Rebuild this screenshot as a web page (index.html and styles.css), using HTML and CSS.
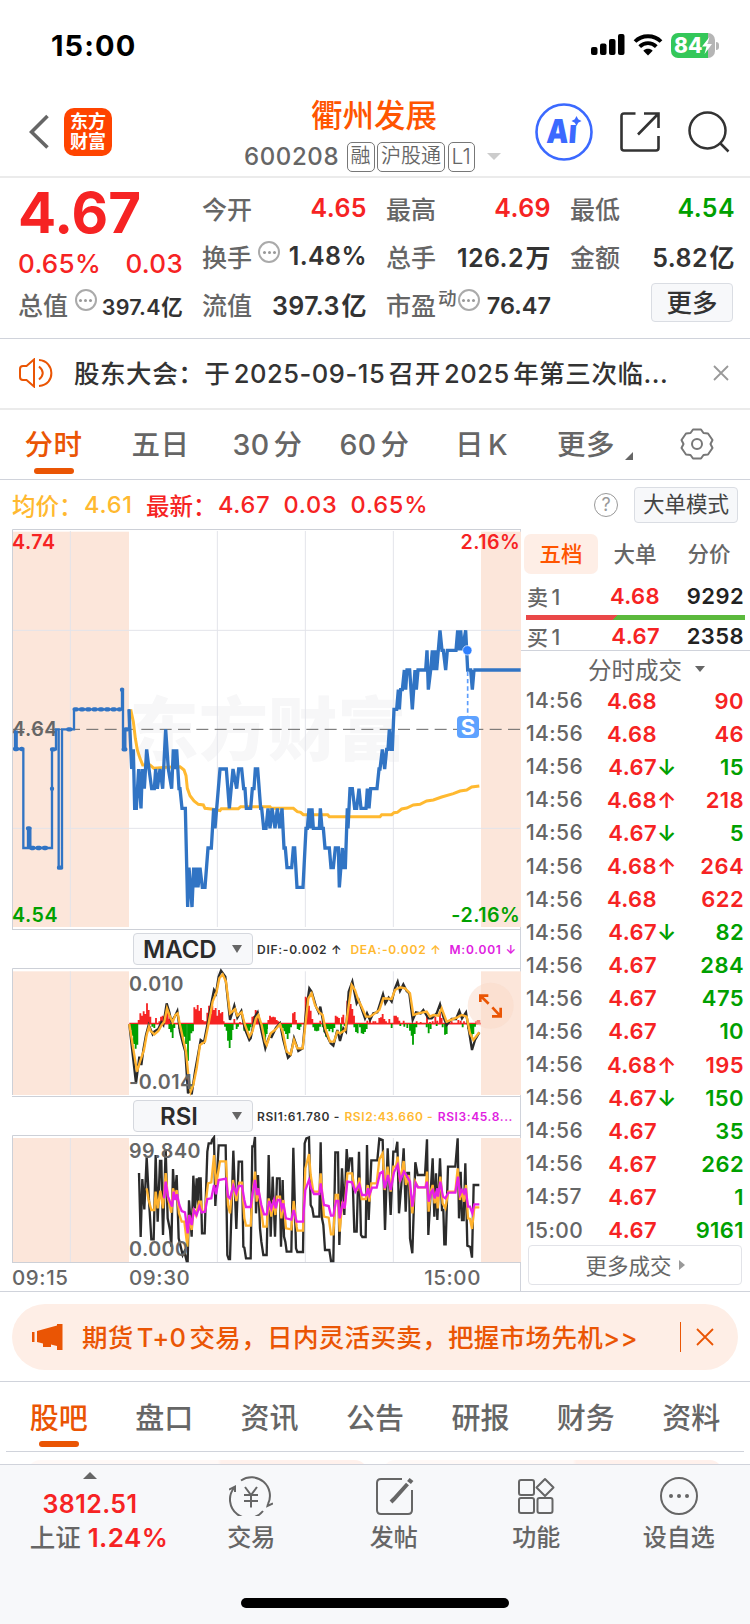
FILE: index.html
```
<!DOCTYPE html>
<html lang="zh-CN">
<head>
    <meta charset="UTF-8">
    <meta name="viewport" content="width=device-width, initial-scale=1.0">
    <title>衢州发展 600208</title>
    <link rel="stylesheet" href="styles.css">
</head>
<body>
    <!-- 状态栏 -->
    <div class="status-bar">
        <span class="clock">15:00</span>
        <div class="status-icons">
            <svg width="34" height="22" viewBox="0 0 34 22">
                <rect x="0" y="13" width="6.500" height="8" rx="2"/>
                <rect x="9" y="9.500" width="6.500" height="11.500" rx="2"/>
                <rect x="18" y="5" width="6.500" height="16" rx="2"/>
                <rect x="27" y="0" width="6.500" height="21" rx="2"/>
            </svg>
            <svg width="30" height="22" viewBox="0 0 30 22">
                <g fill="none" stroke="#000" stroke-width="3.800">
                    <path d="M2 7.500 C9 0.500 21 0.500 28 7.500"/>
                    <path d="M6.700 12.700 C11.500 8 18.500 8 23.300 12.700"/>
                </g>
                <path d="M10.300 16.700 C13 14.200 17 14.200 19.700 16.700 L15 21.500Z"/>
            </svg>
            <div class="battery">
                <span>84</span>
                <svg width="10" height="17" viewBox="0 0 10 17"><path d="M7.500 0 L0 9.500 H4.500 L2.500 17 L10 7 H5.500Z" fill="#fff"/></svg>
            </div>
        </div>
    </div>

    <!-- 标题栏 -->
    <header class="header">
        <div class="header-left">
            <svg width="20" height="36" viewBox="0 0 20 36"><path d="M18.500 2 L2.500 18 L18.500 33.500" fill="none" stroke="#666" stroke-width="3.600"/></svg>
            <div class="logo">东方<br>财富</div>
        </div>
        <div class="header-title">
            <h1>衢州发展</h1>
            <div class="code-line">
                <span class="code">600208</span>
                <span class="tag">融</span>
                <span class="tag">沪股通</span>
                <span class="tag tag-latin">L1</span>
                <i class="arrow-down"></i>
            </div>
        </div>
        <div class="header-right">
            <svg width="58" height="58" viewBox="0 0 58 58">
                <circle cx="29" cy="29" r="27.500" fill="#fff" stroke="#3b69ff" stroke-width="2.600"/>
                <text transform="translate(11 40) skewX(-4) scale(0.84 1)" class="ai-text">Aı</text>
                <path d="M41.500 13 L43.200 16.300 L46.500 18 L43.200 19.700 L41.500 23 L39.800 19.700 L36.500 18 L39.800 16.300Z" fill="#3b69ff"/>
            </svg>
            <svg width="40" height="40" viewBox="0 0 40 40" fill="none" stroke="#333" stroke-width="2.600">
                <path d="M15.500 1.500 H4 Q1.500 1.500 1.500 4 V36 Q1.500 38.500 4 38.500 H36 Q38.500 38.500 38.500 36 V24"/>
                <path d="M24 1.500 H38.500 V16 M38 2 L18 22.500"/>
            </svg>
            <svg width="42" height="42" viewBox="0 0 42 42" fill="none" stroke="#333" stroke-width="2.500">
                <circle cx="19.500" cy="19.500" r="18"/>
                <path d="M32 32 L40.500 40.500"/>
            </svg>
        </div>
    </header>

    <!-- 行情 -->
    <section class="quote">
        <div class="quote-col quote-price">
            <div class="price">4.67</div>
            <div class="change"><span>0.65%</span><span>0.03</span></div>
            <div class="cell cell-small"><label>总值</label><i class="dots"></i><b>397.4 亿</b></div>
        </div>
        <div class="quote-col">
            <div class="cell"><label>今开</label><b class="red">4.65</b></div>
            <div class="cell"><label>换手</label><i class="dots"></i><b>1.48%</b></div>
            <div class="cell"><label>流值</label><b>397.3 亿</b></div>
        </div>
        <div class="quote-col">
            <div class="cell"><label>最高</label><b class="red">4.69</b></div>
            <div class="cell"><label>总手</label><b>126.2 万</b></div>
            <div class="cell cell-pe"><label>市盈<sup>动</sup></label><i class="dots"></i><b>76.47</b></div>
        </div>
        <div class="quote-col">
            <div class="cell"><label>最低</label><b class="green">4.54</b></div>
            <div class="cell"><label>金额</label><b>5.82 亿</b></div>
            <div class="cell cell-more"><button class="btn-more">更多</button></div>
        </div>
    </section>

    <!-- 公告 -->
    <div class="notice">
        <svg width="34" height="30" viewBox="0 0 34 30" fill="none" stroke="#ea5504" stroke-width="2">
            <path d="M15 1.500 L7.500 8 H4 Q1 8 1 11 V19 Q1 22 4 22 H7.500 L15 28.500Z"/>
            <path d="M20 8.500 Q27.500 15 20 21.500"/>
            <path d="M20 2 C36 3 37 27 20 28"/>
        </svg>
        <p>股东大会：于 2025-09-15 召开 2025 年第三次临...</p>
        <svg width="16" height="16" viewBox="0 0 16 16" stroke="#999" stroke-width="1.800"><path d="M1 1 L15 15 M15 1 L1 15"/></svg>
    </div>

    <!-- 周期 -->
    <nav class="period-tabs">
        <span class="active">分时</span>
        <span>五日</span>
        <span>30 分</span>
        <span>60 分</span>
        <span>日 K</span>
        <span class="period-more">更多<i></i></span>
        <svg width="34" height="32" viewBox="0 0 34 32" fill="none" stroke="#777" stroke-width="2">
            <path d="M13 1.500 H21 L23.500 5 L28 5.500 L32.500 12 L30.500 16 L32.500 20 L28 26.500 L23.500 27 L21 30.500 H13 L10.500 27 L6 26.500 L1.500 20 L3.500 16 L1.500 12 L6 5.500 L10.500 5Z" stroke-linejoin="round"/>
            <circle cx="17" cy="16" r="5"/>
        </svg>
    </nav>

    <div class="info-line">
        <span class="yellow info-label">均价：</span><span class="yellow info-avg">4.61</span>
        <span class="info-label">最新：</span><span class="info-num">4.67</span><span class="info-num">0.03</span><span class="info-num">0.65%</span>
        <i class="help">?</i>
        <button class="btn-mode">大单模式</button>
    </div>

    <main class="market">
        <div class="charts">
            <!-- 分时图 -->
            <svg class="chart-main" viewBox="36 12 1527 1203">
                <rect x="39" y="20" width="348" height="1186" class="shade"/>
                <rect x="1443" y="20" width="120" height="1186" class="shade"/>
                <text x="388" y="690" class="watermark">东方财富</text>
                <path class="grid" d="M39 316 H1560 M39 910 H1560 M211 18 V1206 M652 18 V1206 M916 18 V1206 M1180 18 V1206"/>
                <path class="frame" d="M37.500 1215 V13.500 H1563 M37.500 1213.500 H1563"/>
                <path class="dash" d="M39 613 H1560"/>
                <text x="36" y="72" class="axis axis-red">4.74</text>
                <text x="36" y="633" class="axis">4.64</text>
                <text x="36" y="1191" class="axis axis-green">4.54</text>
                <text x="1561" y="72" class="axis axis-red" text-anchor="end">2.16%</text>
                <text x="1561" y="1191" class="axis axis-green" text-anchor="end">-2.16%</text>
                <polyline class="avg" points="392,553 400,590 406,640 412,675 420,700 428,720 450,720 462,730 500,727 540,725 552,735 558,752 562,790 570,812 582,828 595,838 610,840 615,850 640,853 660,857 664,851 715,851 722,845 810,845 814,850 880,850 892,860 902,862 910,869 983,869 988,875 1140,875 1145,869 1175,869 1182,863 1192,862 1205,852 1220,849 1240,840 1260,838 1280,828 1300,825 1325,816 1360,806 1380,798 1400,795 1415,786 1438,783"/>
                <path class="pre" d="M45 672 V620 H50 V672 H70 V969 H84 V910 H91 V969 H156 V673 H168 V613 H176 V1028 H186 V613 H222 V553 H366 V494 H369 V673 H376 V613 H387 V553"/>
                <path class="pre-dots" d="M94 969 H150 M224 553 H360 M205 613 H220 M45 672 H66 M84 910 H88 M156 791 h0.100 M156 673 H168 M366 494 h0.100 M177 1028 H184 M371 673 H376 M376 613 H387"/>
                <polyline class="price-line" points="387,553 395,732 400,673 404,850 409,850 416,732 423,850 427,732 433,791 440,673 447,732 455,791 463,791 467,732 472,791 480,732 488,791 497,613 505,732 515,791 520,673 524,732 530,673 537,791 540,791 546,850 556,850 563,1146 567,1028 576,1146 581,1028 586,1087 590,1028 594,1087 600,1028 607,1087 615,1087 624,969 634,969 641,850 645,910 660,732 679,732 688,850 699,732 710,791 716,732 725,732 731,791 735,791 739,850 752,850 757,791 762,791 766,732 773,732 782,850 785,850 791,910 798,910 804,850 810,910 816,850 825,910 832,850 839,910 846,850 852,969 856,969 861,1028 875,1028 880,969 884,969 891,1087 909,1087 918,910 922,910 927,850 931,910 936,850 940,910 958,910 961,850 966,910 970,910 975,969 988,969 993,1028 1000,1028 1006,969 1015,969 1018,1087 1027,969 1031,1028 1036,1028 1042,850 1044,910 1050,791 1057,791 1064,850 1070,850 1077,791 1083,850 1098,850 1102,791 1107,850 1112,791 1131,791 1137,732 1140,732 1147,673 1154,732 1160,673 1164,673 1168,613 1174,673 1177,673 1182,553 1190,553 1195,494 1198,553 1202,494 1207,494 1213,435 1217,494 1221,435 1229,435 1237,553 1245,435 1249,494 1254,435 1277,435 1281,376 1285,494 1292,435 1297,376 1301,435 1306,376 1310,435 1320,316 1326,376 1330,376 1337,435 1342,376 1368,376 1373,316 1377,376 1382,316 1387,376 1397,316 1403,435 1412,435 1417,494 1422,435"/>
                <path class="price-line price-flat" d="M1420 435 H1562"/>
                <path d="M1403 440 V575" class="sell-line"/>
                <circle cx="1402" cy="376" r="14" class="sell-dot"/>
                <rect x="1371" y="573" width="66" height="66" rx="12" class="sell-box"/>
                <text x="1404" y="630" class="sell-text">S</text>
            </svg>

            <div class="indicator">
                <div class="select select-macd">MACD<i></i></div>
                <p><span>DIF:-0.002 ↑</span><span class="yellow">DEA:-0.002 ↑</span><span class="magenta">M:0.001 ↓</span></p>
            </div>

            <!-- MACD -->
            <svg class="chart-macd" viewBox="36 129 1527 387">
                <rect x="39" y="139" width="348" height="371" class="shade"/>
                <rect x="1443" y="139" width="120" height="371" class="shade"/>
                <path class="grid" d="M211 139 V510 M652 139 V510 M916 139 V510 M1180 139 V510"/>
                <path class="frame" d="M37.500 510 V130.500 H1563 M36 514.500 H1563"/>
                <path class="bar-red" d="M388 296 H1443" stroke-width="2"/>
                <path class="bar-red" d="M416 297v-12 M421 297v-32 M426 297v-25 M431 297v-38 M436 297v-30 M441 297v-62 M446 297v-42 M451 297v-22 M468 297v-18 M478 297v-8 M483 297v-22 M488 297v-25 M493 297v-22 M498 297v-40 M503 297v-42 M508 297v-16 M583 297v-50 M588 297v-44 M593 297v-57 M598 297v-40 M603 297v-48 M608 297v-12 M613 297v-8 M618 297v-8 M622 297v-34 M627 297v-55 M632 297v-30 M637 297v-55 M642 297v-42 M647 297v-48 M652 297v-25 M657 297v-42 M662 297v-32 M667 297v-36 M671 297v-8 M703 297v-15 M720 297v-6 M757 297v-22 M762 297v-24 M767 297v-42 M772 297v-38 M777 297v-8"/>
                <path class="bar-green" d="M392 297v18 M397 297v35 M402 297v60 M407 297v74 M412 297v62 M457 297v8 M463 297v12 M508 297v15 M513 297v25 M518 297v42 M523 297v12 M538 297v15 M543 297v25 M548 297v40 M553 297v38 M558 297v60 M564 297v110 M569 297v50 M574 297v28 M579 297v22 M675 297v8 M680 297v20 M684 297v50 M689 297v72 M694 297v48 M698 297v18 M710 297v15 M714 297v8 M733 297v20 M738 297v25 M743 297v22 M748 297v20 M752 297v10 M785 297v18 M790 297v30 M795 297v48 M800 297v30"/>
                <g transform="translate(780 0)">
                    <path class="bar-red" d="M25 297v-12 M30 297v-25 M35 297v-20 M40 297v-22 M45 297v-20 M50 297v-12 M55 297v-8 M60 297v-6 M99 297v-32 M104 297v-36 M108 297v-12 M137 297v-82 M142 297v-78 M147 297v-55 M152 297v-40 M157 297v-15 M181 297v-10 M227 297v-25 M232 297v-22 M237 297v-18 M246 297v-20 M250 297v-28 M262 297v-70 M267 297v-55 M272 297v-60 M277 297v-45 M282 297v-25 M322 297v-10 M330 297v-12 M340 297v-8 M346 297v-8 M358 297v-18 M363 297v-20 M368 297v-30 M373 297v-15 M378 297v-8 M388 297v-15 M403 297v-25 M408 297v-25 M413 297v-20 M418 297v-10 M431 297v-10 M470 297v-8 M482 297v-6 M501 297v-22 M510 297v-6 M518 297v-8 M526 297v-22 M532 297v-10 M540 297v-35 M545 297v-18 M575 297v-8 M595 297v-12 M602 297v-10 M612 297v-8 M648 297v-8 M653 297v-12 M658 297v-12"/>
                    <path class="bar-green" d="M6 297v10 M11 297v25 M16 297v38 M21 297v15 M68 297v12 M73 297v22 M78 297v30 M83 297v45 M88 297v28 M93 297v10 M113 297v15 M118 297v18 M122 297v8 M160 297v10 M165 297v20 M170 297v22 M175 297v20 M180 297v8 M188 297v10 M193 297v25 M198 297v38 M203 297v15 M208 297v22 M213 297v15 M218 297v25 M223 297v12 M243 297v25 M254 297v6 M283 297v10 M288 297v24 M293 297v28 M300 297v10 M305 297v28 M310 297v30 M315 297v24 M320 297v15 M395 297v12 M421 297v6 M433 297v8 M442 297v12 M450 297v20 M455 297v35 M459 297v62 M464 297v30 M469 297v10 M500 297v10 M506 297v28 M512 297v15 M530 297v6 M548 297v10 M555 297v32 M560 297v30 M608 297v10 M625 297v15 M630 297v25 M635 297v38 M640 297v30 M645 297v8"/>
                </g>
                <polyline class="line-black" points="388,297 396,370 408,475 418,395 424,420 430,375 438,330 446,300 458,328 463,320 475,312 484,292 490,300 500,235 508,262 514,290 524,275 532,258 540,320 550,360 556,380 564,505 570,490 575,508 585,440 602,345 612,352 622,300 634,235 642,195 648,205 656,155 663,137 676,155 690,285 703,242 712,278 724,258 734,310 748,345 752,340 765,275 773,262 785,320 796,370 804,345 810,330 815,335 828,308 840,295 850,345 864,398 872,390 882,340 895,378 908,370 918,260 928,190 935,200 948,245 956,262 961,245 975,320 992,355 1000,362 1012,315 1020,348 1030,310 1038,320 1046,200 1057,170 1070,235 1076,225 1095,280 1101,265 1110,285 1120,265 1132,262 1149,208 1156,235 1166,218 1175,230 1185,190 1193,170 1200,198 1210,178 1220,198 1228,205 1238,285 1248,262 1262,265 1270,255 1285,280 1295,280 1310,265 1320,238 1330,275 1340,300 1355,282 1368,282 1378,258 1386,280 1398,262 1416,375 1425,345 1438,322"/>
                <polyline class="line-yellow" points="388,297 398,360 411,440 420,410 432,375 440,330 447,305 452,318 463,328 475,318 485,300 493,290 501,250 508,270 518,292 526,270 533,265 540,300 550,345 558,380 565,450 572,500 580,480 590,430 600,360 615,350 625,300 638,230 650,200 658,160 668,148 678,170 690,265 705,252 712,272 725,262 735,300 748,335 757,320 768,280 775,270 785,300 795,350 800,360 812,325 825,315 840,298 848,320 860,380 872,388 882,345 892,370 908,370 916,300 925,220 935,205 945,240 958,262 968,270 976,310 990,350 1002,350 1012,320 1020,325 1036,315 1045,250 1055,180 1065,195 1075,225 1085,245 1098,275 1110,275 1125,265 1138,255 1150,220 1175,222 1185,195 1200,187 1215,190 1230,205 1240,270 1255,265 1280,260 1290,275 1300,270 1315,272 1325,250 1340,290 1370,278 1385,270 1400,275 1410,325 1420,345 1438,322"/>
                <text x="387" y="199" class="axis">0.010</text>
                <text x="387" y="492" class="axis">-0.014</text>
                <circle cx="1472" cy="242" r="69" class="expand-bg"/>
                <path class="expand" d="M1441 231 V212 H1465 M1443 214 L1466 236 M1476 274 H1502 V248 M1500 272 L1477 247"/>
            </svg>

            <div class="indicator">
                <div class="select select-rsi">RSI<i></i></div>
                <p class="rsi-legend"><span>RSI1:61.780 -</span><span class="yellow">RSI2:43.660 -</span><span class="magenta">RSI3:45.8...</span></p>
            </div>

            <!-- RSI -->
            <svg class="chart-rsi" viewBox="36 630 1527 384">
                <rect x="39" y="639" width="348" height="372" class="shade"/>
                <rect x="1443" y="639" width="120" height="372" class="shade"/>
                <path class="grid" d="M211 639 V1011 M652 639 V1011 M916 639 V1011 M1180 639 V1011"/>
                <path class="frame" d="M37.500 1014 V631.500 H1563 M36 1012.500 H1563"/>
                <polyline class="line-black" points="417,744 422,936 427,762 433,853 440,697 446,810 454,943 461,943 467,690 473,890 480,708 484,708 489,930 497,672 503,880 510,915 514,965 519,732 524,822 530,750 536,940 541,960 548,990 553,980 560,1008 563,1008 567,826 575,935 580,752 585,850 590,760 595,850 597,760 602,760 606,925 614,925 622,680 626,655 634,655 636,645 642,637 646,843 656,661 677,661 682,990 686,1002 690,1002 700,677 709,912 716,710 726,710 730,965 733,968 738,1000 752,1000 757,664 761,664 765,636 768,865 774,750 780,910 784,950 790,990 800,990 806,690 812,935 818,755 825,935 831,760 839,760 843,965 848,765 852,935 856,950 860,980 874,980 880,668 888,970 892,981 909,981 914,655 919,640 927,637 932,840 937,850 941,875 958,875 962,652 966,880 970,900 975,975 988,975 993,1008 1000,1008 1006,682 1014,682 1018,960 1026,730 1033,870 1040,672 1045,740 1050,700 1056,700 1063,920 1070,920 1077,680 1083,930 1087,936 1097,936 1101,660 1106,885 1114,706 1132,706 1138,641 1148,645 1155,915 1163,670 1172,870 1180,680 1187,680 1192,650 1197,865 1204,780 1211,670 1217,860 1222,744 1227,744 1230,940 1237,985 1246,712 1253,750 1275,750 1281,643 1285,930 1292,800 1298,700 1303,875 1308,745 1312,885 1320,700 1326,855 1330,855 1333,958 1337,958 1344,725 1366,725 1373,640 1377,880 1382,740 1386,885 1391,885 1396,715 1402,962 1411,966 1416,998 1421,780 1438,780"/>
                <polyline class="line-yellow" points="440,790 446,825 454,855 463,855 467,800 473,850 481,797 489,850 497,744 504,820 514,863 519,790 525,815 530,795 537,865 545,890 553,890 562,965 567,870 575,915 581,850 588,870 597,830 603,830 606,860 614,860 624,775 634,772 642,690 648,780 660,709 678,709 684,840 690,865 699,765 709,828 718,773 726,773 733,880 738,902 752,902 757,815 765,740 770,830 775,790 783,850 790,905 800,905 806,820 814,875 820,825 826,870 831,815 840,815 844,880 850,825 858,910 874,913 881,828 890,905 892,917 909,917 916,730 927,687 932,750 940,800 958,800 962,745 972,875 986,878 993,928 1000,928 1007,810 1014,810 1019,920 1027,830 1034,850 1042,745 1056,745 1065,795 1072,795 1078,758 1085,822 1098,822 1103,780 1108,830 1114,775 1130,775 1138,703 1148,685 1154,795 1163,725 1172,800 1180,725 1188,725 1193,695 1200,770 1211,708 1218,780 1226,750 1237,865 1246,770 1254,787 1277,787 1281,740 1286,860 1292,800 1298,780 1304,835 1310,800 1313,850 1321,755 1328,835 1336,850 1345,800 1366,800 1373,730 1380,825 1384,795 1392,830 1398,780 1404,880 1410,882 1416,912 1423,847 1438,847"/>
                <polyline class="line-magenta" points="492,820 497,770 504,815 516,845 521,800 526,825 531,808 538,840 545,858 555,862 563,925 568,870 575,900 582,855 590,870 598,845 605,862 615,860 622,822 634,820 642,780 648,808 656,765 678,761 684,815 690,820 700,782 709,805 716,783 726,783 733,825 738,846 752,846 758,805 765,765 771,810 775,790 784,840 792,868 800,868 808,828 814,850 822,825 827,850 833,825 840,825 845,850 850,835 858,880 874,884 881,855 890,890 909,890 916,795 927,765 933,790 942,807 958,807 962,775 972,840 986,843 993,872 1000,872 1008,828 1015,828 1019,880 1028,835 1034,850 1042,770 1056,772 1066,800 1078,778 1086,810 1099,810 1104,790 1108,810 1116,788 1130,788 1140,745 1148,740 1154,790 1164,750 1172,795 1182,742 1193,720 1201,765 1212,740 1220,752 1230,770 1237,845 1247,775 1254,787 1277,787 1281,770 1286,830 1294,800 1298,795 1304,820 1312,790 1314,815 1321,770 1329,815 1336,820 1345,803 1366,803 1374,755 1380,808 1386,795 1392,805 1397,790 1404,845 1410,845 1417,865 1423,838 1438,838"/>
                <text x="387" y="699" class="axis">99.840</text>
                <text x="387" y="992" class="axis">0.000</text>
            </svg>
            <div class="time-axis"><span>09:15</span><span>09:30</span><span>15:00</span></div>
        </div>

        <!-- 盘口 / 成交 -->
        <aside class="orders">
            <div class="order-tabs"><span class="active">五档</span><span>大单</span><span>分价</span></div>
            <div class="level"><span>卖 1</span><b>4.68</b><em>9292</em></div>
            <div class="ratio"></div>
            <div class="level level-buy"><span>买 1</span><b>4.67</b><em>2358</em></div>
            <div class="trades-title">分时成交<i></i></div>
            <ul class="trades">
                <li><span>14:56</span><b>4.68</b><i></i><em>90</em></li>
                <li><span>14:56</span><b>4.68</b><i></i><em>46</em></li>
                <li><span>14:56</span><b>4.67</b><i class="green">↓</i><em class="green">15</em></li>
                <li><span>14:56</span><b>4.68</b><i>↑</i><em>218</em></li>
                <li><span>14:56</span><b>4.67</b><i class="green">↓</i><em class="green">5</em></li>
                <li><span>14:56</span><b>4.68</b><i>↑</i><em>264</em></li>
                <li><span>14:56</span><b>4.68</b><i></i><em>622</em></li>
                <li><span>14:56</span><b>4.67</b><i class="green">↓</i><em class="green">82</em></li>
                <li><span>14:56</span><b>4.67</b><i></i><em class="green">284</em></li>
                <li><span>14:56</span><b>4.67</b><i></i><em class="green">475</em></li>
                <li><span>14:56</span><b>4.67</b><i></i><em class="green">10</em></li>
                <li><span>14:56</span><b>4.68</b><i>↑</i><em>195</em></li>
                <li><span>14:56</span><b>4.67</b><i class="green">↓</i><em class="green">150</em></li>
                <li><span>14:56</span><b>4.67</b><i></i><em class="green">35</em></li>
                <li><span>14:56</span><b>4.67</b><i></i><em class="green">262</em></li>
                <li><span>14:57</span><b>4.67</b><i></i><em class="green">1</em></li>
                <li><span>15:00</span><b>4.67</b><i></i><em class="green">9161</em></li>
            </ul>
            <button class="btn-trades">更多成交<i></i></button>
        </aside>
    </main>

    <div class="promo-wrap">
        <div class="promo">
            <svg width="31" height="26" viewBox="0 0 31 26" fill="#ea5504">
                <path d="M0 8 H2.500 V18 H0Z M5 7 L25 1.500 V0 H30.500 V26 H25 V22 L19 20.500 V23 H11 V19.500 L5 18Z"/>
            </svg>
            <p>期货 T+0 交易，日内灵活买卖，把握市场先机&gt;&gt;</p>
            <i class="divider"></i>
            <svg width="18" height="18" viewBox="0 0 18 18" stroke="#ea5504" stroke-width="1.800"><path d="M1 1 L17 17 M17 1 L1 17"/></svg>
        </div>
    </div>

    <nav class="content-tabs">
        <span class="active">股吧</span>
        <span>盘口</span>
        <span>资讯</span>
        <span>公告</span>
        <span>研报</span>
        <span>财务</span>
        <span>资料</span>
    </nav>
    <div class="cards-peek"><i></i><i></i></div>

    <!-- 底部栏 -->
    <footer class="bottom-bar">
        <div class="bottom-nav">
            <div class="index">
                <i class="arrow-up"></i>
                <b>3812.51</b>
                <p>上证 <b>1.24%</b></p>
            </div>
            <div class="nav-item">
                <svg width="44" height="40" viewBox="0 0 44 40" fill="none" stroke="#666" stroke-width="2">
                    <path d="M12 4.500 A18.500 18.500 0 0 1 39 28 M39 28 L38.500 30 L44 27.500"/>
                    <path d="M34 35 A18.500 18.500 0 0 1 5 12 M0 13.500 L6 10.500 V16"/>
                    <path d="M16 11 L22 19 L28 11 M15 19 H29 M15 25 H29 M22 19 V31.500"/>
                </svg>
                <span>交易</span>
            </div>
            <div class="nav-item">
                <svg width="40" height="40" viewBox="0 0 40 40" fill="none" stroke="#666" stroke-width="2">
                    <path d="M28 3 H7 Q3 3 3 7 V34 Q3 38 7 38 H34 Q38 38 38 34 V14"/>
                    <path d="M33.500 8 L20 23 L17 26" stroke-width="4"/>
                    <path d="M35 6.500 L37.500 3.500" stroke-width="5"/>
                </svg>
                <span>发帖</span>
            </div>
            <div class="nav-item">
                <svg width="40" height="40" viewBox="0 0 40 40" fill="none" stroke="#666" stroke-width="2">
                    <rect x="3" y="4" width="15" height="15" rx="2"/>
                    <rect x="3" y="22" width="15" height="15" rx="2"/>
                    <rect x="21.500" y="22" width="15" height="15" rx="2"/>
                    <path d="M29 3 L37.500 11.500 L29 20 L20.500 11.500Z" stroke-linejoin="round"/>
                </svg>
                <span>功能</span>
            </div>
            <div class="nav-item">
                <svg width="40" height="40" viewBox="0 0 40 40" fill="none" stroke="#666" stroke-width="2">
                    <circle cx="20" cy="20" r="18"/>
                    <path d="M12 20 h0.010 M20 20 h0.010 M28 20 h0.010" stroke-width="4" stroke-linecap="round"/>
                </svg>
                <span>设自选</span>
            </div>
        </div>
        <div class="home-indicator"></div>
    </footer>
</body>
</html>
```
FILE: styles.css
```
* {
    box-sizing: border-box;
}
body {
    margin: 0;
    width: 750px;
    height: 1624px;
    overflow: hidden;
    background: #fff;
    color: #333;
    font-family: Inter, "Noto Sans CJK SC", sans-serif;
    font-weight: 500;
}
p, h1, ul {
    margin: 0;
    padding: 0;
}
b, em, i {
    font-style: normal;
    font-weight: 600;
}
svg {
    display: block;
    flex: none;
}
button {
    font-family: inherit;
    font-weight: 500;
    padding: 0;
    background: #f7f8fa;
    border: 1px solid #dadde3;
    border-radius: 4px;
    color: #333;
    white-space: nowrap;
}
.red {
    color: #f62323;
}
.green {
    color: #00a000;
}
.yellow {
    color: #ffb930;
}
.magenta {
    color: #e020e0;
}

/* 状态栏 */
.status-bar {
    display: flex;
    justify-content: space-between;
    align-items: center;
    height: 88px;
    padding: 2px 31px 0 51px;
}
.clock {
    font-size: 29px;
    font-weight: 700;
    color: #000;
    letter-spacing: 1.1px;
}
.status-icons {
    display: flex;
    align-items: center;
    gap: 8px;
}
.battery {
    display: flex;
    align-items: center;
    width: 44px;
    height: 25px;
    padding-left: 3px;
    margin-right: 4px;
    border-radius: 7px;
    background: linear-gradient(90deg, #34c759 37px, #b5b5b5 37px);
    color: #fff;
    font-size: 21px;
    position: relative;
}
.battery span {
    font-weight: 800;
}
.battery::after {
    content: "";
    position: absolute;
    right: -4px;
    top: 9px;
    width: 3px;
    height: 8px;
    border-radius: 0 3px 3px 0;
    background: #b5b5b5;
}

/* 标题栏 */
.header {
    display: grid;
    grid-template-columns: 244px 258px 1fr;
    height: 90px;
    border-bottom: 2px solid #ebebeb;
}
.header-left {
    display: flex;
    align-items: center;
    gap: 15px;
    padding-left: 29px;
}
.logo {
    width: 48px;
    height: 48px;
    padding-top: 4px;
    border-radius: 10px;
    background: #ff4400;
    color: #fff;
    font-size: 18px;
    font-weight: 700;
    line-height: 20px;
    text-align: center;
}
.header-title h1 {
    padding: 8px 0 0 2px;
    color: #ff5500;
    font-size: 31.500px;
    font-weight: 500;
    line-height: 40px;
    text-align: center;
}
.code-line {
    display: flex;
    align-items: center;
    gap: 2.500px;
    height: 31px;
    margin-top: 5px;
}
.code {
    width: 100px;
    color: #666;
    font-size: 24px;
    letter-spacing: 0.6px;
}
.tag {
    height: 30px;
    padding: 0 3px;
    border: 1px solid #777;
    border-radius: 5px;
    color: #666;
    font-size: 20px;
    font-weight: 350;
    line-height: 27px;
    white-space: nowrap;
}
.tag-latin {
    font-size: 21px;
}
.arrow-down {
    margin-left: 10px;
    border: 7px solid transparent;
    border-top-color: #ccc;
    border-bottom: 0;
}
.header-right {
    display: flex;
    align-items: center;
    padding-left: 33px;
    gap: 27px;
}
.header-right svg:last-child {
    margin-left: 1px;
}
.ai-text {
    font-family: Inter, sans-serif;
    font-size: 33px;
    font-weight: 900;
    fill: #3b69ff;
}

/* 行情 */
.quote {
    display: flex;
    gap: 20px;
    height: 161px;
    padding: 6px 14px 0 18px;
    border-bottom: 1px solid #d0d3db;
}
.quote-col {
    width: 165px;
    flex: none;
}
.quote-col:first-child,
.quote-col:nth-child(2),
.quote-col:nth-child(3) {
    margin-right: -1px;
}
.cell {
    display: flex;
    align-items: center;
    height: 48px;
    font-size: 25px;
    white-space: nowrap;
}
.cell label {
    color: #666;
    font-weight: 450;
}
.cell b {
    margin-left: auto;
    word-spacing: -5px;
    letter-spacing: 0.4px;
}
.dots {
    display: flex;
    justify-content: center;
    align-items: center;
    width: 22px;
    height: 22px;
    margin: -8px 0 0 6px;
    border: 2px solid #aaa;
    border-radius: 50%;
}
.dots::before {
    content: "";
    width: 3px;
    height: 3px;
    border-radius: 50%;
    background: #999;
    box-shadow: -5px 0 #999, 5px 0 #999;
}
.price {
    height: 61px;
    padding-top: 1px;
    color: #f62323;
    font-size: 56.500px;
    font-weight: 750;
    line-height: 56px;
}
.change {
    display: flex;
    justify-content: space-between;
    height: 35px;
    color: #f62323;
    font-size: 26px;
    font-weight: 550;
    letter-spacing: 0.3px;
    line-height: 38px;
}
.cell-small b {
    font-size: 21.500px;
    padding-top: 3px;
    margin-left: 0;
    letter-spacing: 0.2px;
}
.cell-small {
    justify-content: space-between;
}
.cell-small .dots {
    margin-left: 2px;
}
.cell-pe b {
    font-size: 23.500px;
    padding-top: 2px;
    letter-spacing: 0;
}
.cell-pe .dots {
    margin-left: 1px;
}
.cell-pe sup {
    font-size: 18.500px;
    line-height: 0;
    vertical-align: 10px;
    margin-left: 2px;
}
.btn-more {
    width: 82px;
    height: 39px;
    margin: -3px 2px 0 auto;
    font-size: 25.500px;
    line-height: 36px;
}

/* 公告 */
.notice {
    display: flex;
    align-items: center;
    height: 71px;
    padding: 0 21px 2px 19px;
    border-bottom: 2px solid #ebebeb;
}
.notice p {
    flex: 1;
    padding: 0 0 3px 21px;
    font-size: 25.500px;
    letter-spacing: 0.55px;
    word-spacing: -4px;
    white-space: nowrap;
}

/* 周期 */
.period-tabs {
    display: grid;
    grid-template-columns: repeat(5, 107px) 102px 120px;
    justify-items: center;
    align-items: center;
    height: 70px;
    padding-bottom: 2px;
    border-bottom: 1px solid #d0d3db;
    font-size: 28.500px;
    color: #666;
    letter-spacing: 0.4px;
    word-spacing: -4px;
}
.period-tabs span {
    position: relative;
    top: -1px;
}
.period-tabs .active,
.content-tabs .active {
    color: #ea5504;
}
.period-tabs .active::after,
.content-tabs .active::after {
    content: "";
    position: absolute;
    left: calc(50% - 20px);
    bottom: -11px;
    width: 40px;
    height: 6px;
    border-radius: 3px;
    background: #ea5504;
}
.content-tabs .active::after {
    bottom: -10px;
}
.period-more i {
    position: absolute;
    right: -18px;
    bottom: 3px;
    border-left: 8px solid transparent;
    border-bottom: 8px solid #666;
}

.info-line {
    display: flex;
    align-items: center;
    height: 49px;
    padding: 0 12px 0 12px;
    color: #f62323;
    font-size: 23.500px;
    font-weight: 550;
    letter-spacing: 0.8px;
}
.info-label {
    width: 72px;
    font-weight: 500;
    letter-spacing: 0;
}
.info-avg {
    margin-right: 13px;
    font-weight: 500;
}
.info-num {
    margin-right: 13px;
}
.help {
    width: 24px;
    height: 24px;
    margin: 0 16px 0 auto;
    border: 1.500px solid #999;
    border-radius: 50%;
    color: #999;
    font-size: 18px;
    font-weight: 400;
    letter-spacing: 0;
    line-height: 22px;
    text-align: center;
}
.btn-mode {
    width: 104px;
    height: 36px;
    color: #444;
    font-size: 21.500px;
    line-height: 31px;
    font-weight: 400;
}

/* 图表 */
.market {
    display: flex;
    height: 763px;
    border-bottom: 1px solid #d0d3db;
}
.charts {
    width: 521px;
    padding-left: 12px;
    border-right: 1px solid #d0d3db;
}
.chart-main {
    width: 509px;
    height: 401px;
}
.chart-macd {
    width: 509px;
    height: 129px;
}
.chart-rsi {
    width: 509px;
    height: 128px;
}
.shade {
    fill: #fce6da;
}
.grid {
    fill: none;
    stroke: #e3e4ea;
    stroke-width: 3;
}
.frame {
    fill: none;
    stroke: #cdd0d7;
    stroke-width: 3;
}
.dash {
    stroke: #666;
    stroke-width: 3;
    stroke-dasharray: 36 19;
}
.axis {
    font-size: 59px;
    font-weight: 600;
    fill: #666;
    letter-spacing: 1.500px;
}
.axis-red {
    fill: #f62323;
}
.axis-green {
    fill: #00a000;
}
.watermark {
    font-size: 208px;
    font-weight: 800;
    fill: #f7f7f8;
}
.avg {
    fill: none;
    stroke: #ffb930;
    stroke-width: 9;
}
.pre {
    fill: none;
    stroke: #3174c4;
    stroke-width: 7;
}
.pre-dots {
    fill: none;
    stroke: #3174c4;
    stroke-width: 13;
    stroke-linecap: round;
    stroke-dasharray: 6 13;
}
.price-line {
    fill: none;
    stroke: #3174c4;
    stroke-width: 10;
}
.price-flat {
    stroke-width: 11;
}
.sell-line {
    stroke: #5c9dfc;
    stroke-width: 5;
    stroke-dasharray: 13 9;
}
.sell-dot {
    fill: #2f80ff;
    stroke: #fff;
    stroke-width: 2;
}
.sell-box {
    fill: #5ea2ff;
}
.sell-text {
    fill: #fff;
    font-size: 66px;
    font-weight: 700;
    text-anchor: middle;
}
.bar-red,
.bar-green {
    fill: none;
    stroke: #f62323;
    stroke-width: 5.500;
}
.bar-green {
    stroke: #00a000;
}
.line-black,
.line-yellow,
.line-magenta {
    fill: none;
    stroke: #2b2b2b;
    stroke-width: 7;
}
.line-yellow {
    stroke: #ffb22e;
}
.line-magenta {
    stroke: #e620e6;
}
.expand-bg {
    fill: #f9d9c8;
    fill-opacity: 0.5;
}
.expand {
    fill: none;
    stroke: #ea5504;
    stroke-width: 8;
}
.indicator {
    display: flex;
    align-items: center;
    height: 38px;
    padding-left: 121px;
}
.select {
    display: flex;
    align-items: center;
    justify-content: space-between;
    width: 120px;
    height: 32px;
    padding: 0 10px 0 9px;
    border: 1px solid #d5d8de;
    border-radius: 4px;
    background: #f7f8fa;
    font-size: 24px;
    font-weight: 600;
    color: #2b2b2b;
}
.select-rsi {
    padding-left: 26px;
}
.select i {
    border: 5px solid transparent;
    border-top: 8px solid #666;
    border-bottom: 0;
}
.indicator p {
    display: flex;
    gap: 8px;
    padding-left: 4px;
    font-size: 12px;
    font-weight: 600;
    letter-spacing: 0.75px;
    white-space: nowrap;
}
.indicator .rsi-legend {
    gap: 4.500px;
    letter-spacing: 0.6px;
}
.time-axis {
    display: grid;
    grid-template-columns: 117px 1fr auto;
    padding: 3px 39px 0 0;
    color: #666;
    font-size: 20.500px;
    line-height: 24px;
    letter-spacing: 0.6px;
}

/* 盘口 */
.orders {
    width: 229px;
    padding-top: 5px;
}
.order-tabs {
    display: flex;
    height: 40px;
    padding-left: 3px;
    color: #666;
    font-size: 21.500px;
    line-height: 41px;
    text-align: center;
}
.order-tabs span {
    width: 74px;
    border-radius: 7px;
}
.order-tabs .active {
    background: #feeee6;
    color: #ff5500;
}
.level {
    display: grid;
    grid-template-columns: 60px 73px 1fr;
    align-items: center;
    height: 41px;
    padding: 3px 6px 0 6px;
    font-size: 22px;
    letter-spacing: 0.4px;
}
.level span {
    font-size: 21px;
    color: #666;
    word-spacing: -3px;
}
.level b,
.trades b {
    color: #f62323;
    text-align: right;
}
.level em {
    color: #222;
    text-align: right;
}
.level-buy {
    height: 31px;
    padding-top: 1px;
    border-bottom: 1px solid #d0d3db;
}
.ratio {
    height: 5px;
    margin: 0 5px 0 5px;
    background: linear-gradient(135deg, #ea4848 0 41%, #5bb93c 41%);
}
.trades-title {
    display: flex;
    align-items: center;
    height: 33px;
    padding: 2px 0 0 67px;
    color: #666;
    font-size: 23.500px;
    font-weight: 400;
}
.trades-title i {
    margin-left: 13px;
    border: 5px solid transparent;
    border-top: 6px solid #666;
    border-bottom: 0;
}
.trades {
    list-style: none;
}
.trades li {
    display: grid;
    grid-template-columns: 60px 71px 20px 1fr;
    align-items: center;
    height: 33.100px;
    padding: 0 6px 0 5px;
    color: #f62323;
    font-size: 22px;
    letter-spacing: 0.4px;
}
.trades span {
    color: #666;
    font-size: 21px;
    font-weight: 500;
}
.trades em {
    text-align: right;
}
.btn-trades {
    display: flex;
    align-items: center;
    justify-content: center;
    width: 214px;
    height: 40px;
    margin: -2px 0 0 7px;
    background: #fff;
    border-color: #e2e3e8;
    color: #666;
    font-size: 21.500px;
    font-weight: 400;
}
.btn-trades i {
    margin-left: 7px;
    border: 5px solid transparent;
    border-left: 6px solid #999;
    border-right: 0;
}

/* 推广条 */
.promo-wrap {
    height: 90px;
    padding: 12px 12px 0;
    border-bottom: 1px solid #d0d3db;
}
.promo {
    display: flex;
    align-items: center;
    height: 66px;
    padding: 0 24px 0 20px;
    border-radius: 33px;
    background: #feeee6;
    color: #ea5504;
}
.promo p {
    flex: 1;
    padding: 0 0 4px 19px;
    font-size: 25.500px;
    letter-spacing: 0.35px;
    word-spacing: -4px;
    white-space: nowrap;
}
.divider {
    width: 1px;
    height: 30px;
    margin-right: 15px;
    background: #ea5504;
}

/* 内容标签 */
.content-tabs {
    display: grid;
    grid-template-columns: repeat(7, 1fr);
    justify-items: center;
    align-items: center;
    height: 70px;
    margin: 0 6px;
    padding-bottom: 1px;
    border-bottom: 1px solid #d0d3db;
    color: #666;
    font-size: 29px;
}
.content-tabs span {
    position: relative;
}
.cards-peek {
    display: flex;
    gap: 16px;
    height: 12px;
    padding: 8px 28px 0;
    overflow: hidden;
}
.cards-peek i {
    flex: 1;
    height: 30px;
    border-radius: 12px;
    background: linear-gradient(90deg, #fff9f7 56%, #fff1ec 57%);
}

/* 底部栏 */
.bottom-bar {
    height: 160px;
    border-top: 1px solid #d0d3db;
    background: #f7f8fa;
}
.bottom-nav {
    display: grid;
    grid-template-columns: 180px repeat(4, 142.500px);
    height: 133px;
    color: #666;
    font-size: 24px;
    font-weight: 450;
}
.index {
    display: flex;
    flex-direction: column;
    align-items: center;
    padding: 7px 0 0 0;
}
.index b {
    color: #f62323;
    font-size: 25px;
    letter-spacing: 0.4px;
}
.arrow-up {
    border: 7px solid transparent;
    border-bottom-color: #666;
    border-top: 0;
}
.index > b {
    margin-top: 11px;
    line-height: 28px;
}
.index p {
    margin-top: 1px;
    padding-left: 18px;
    font-size: 25.500px;
    line-height: 38px;
}
.index p b {
    font-size: 26px;
}
.nav-item {
    display: flex;
    flex-direction: column;
    align-items: center;
    padding-top: 11px;
}
.nav-item span {
    margin-top: 4px;
    line-height: 36px;
}
.home-indicator {
    width: 268px;
    height: 10px;
    margin: 0 auto;
    border-radius: 5px;
    background: #000;
}
```
